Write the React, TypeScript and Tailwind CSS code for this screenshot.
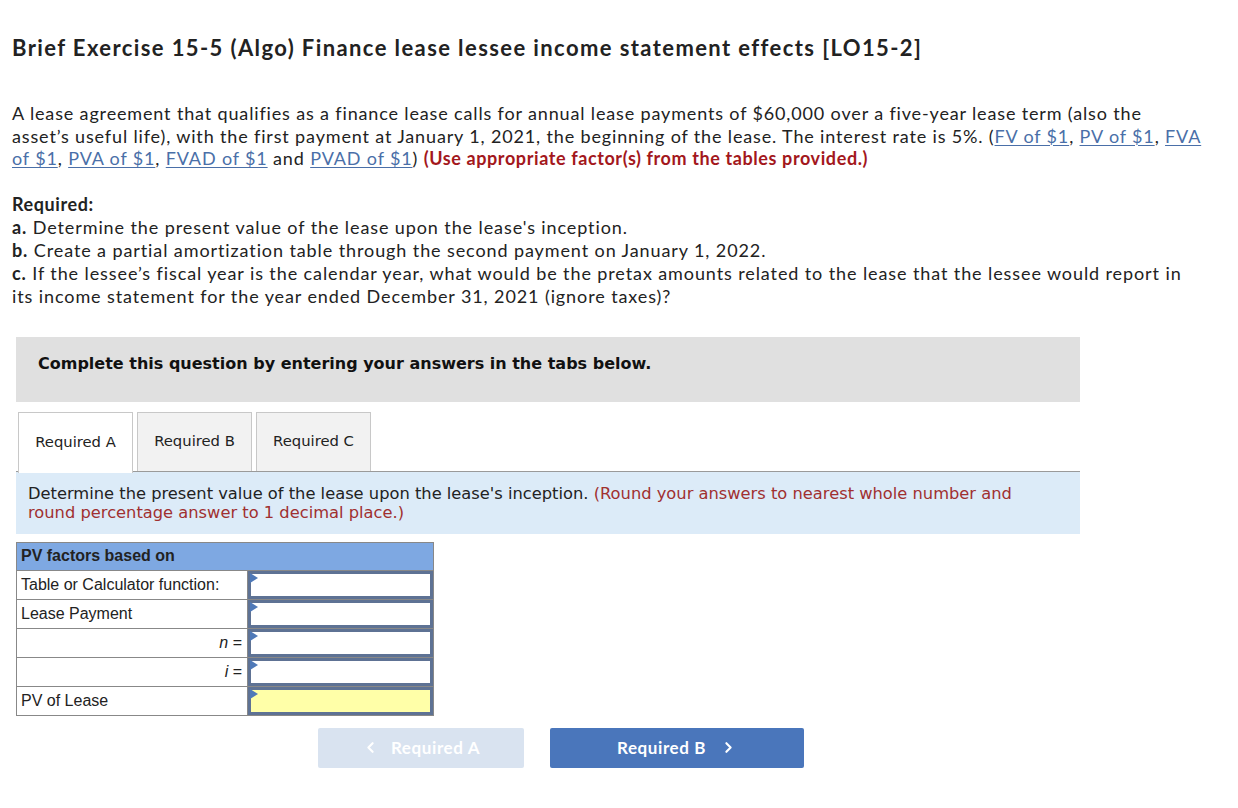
import { ChevronLeft, ChevronRight } from 'lucide-react';

const proxima = { fontFamily: 'Lato, "Open Sans", sans-serif' };

function Link({ children }: { children: React.ReactNode }) {
  return <span className="text-[#4a6fa8] underline decoration-1 underline-offset-2">{children}</span>;
}

function InputCell({ yellow }: { yellow?: boolean }) {
  return (
    <div className={`relative h-[28px] border-[3px] border-[#5e7294] ${yellow ? 'bg-[#ffffa8]' : 'bg-white'}`}>
      <span className="absolute -left-[1px] -top-[1px] w-0 h-0 border-t-[5px] border-b-[5px] border-l-[8px] border-t-transparent border-b-transparent border-l-[#4f79b8]" />
    </div>
  );
}

const rows = [
  { label: 'Table or Calculator function:', align: 'left' },
  { label: 'Lease Payment', align: 'left' },
  { label: 'n =', align: 'right', italic: true },
  { label: 'i =', align: 'right', italic: true },
  { label: 'PV of Lease', align: 'left', yellow: true },
];

export default function App() {
  return (
    <div className="bg-white w-[1238px] h-[808px] text-[#222] overflow-hidden">
      <h1 className="pt-[34px] pl-[12px] text-[22px] font-bold leading-[28px] tracking-[1.4px] whitespace-nowrap" style={proxima}>
        Brief Exercise 15-5 (Algo) Finance lease lessee income statement effects [LO15-2]
      </h1>

      <p className="mt-[40px] pl-[12px] text-[18px] leading-[22.5px] tracking-[0.85px] whitespace-nowrap" style={proxima}>
        A lease agreement that qualifies as a finance lease calls for annual lease payments of $60,000 over a five-year lease term (also the
        <br />
        asset’s useful life), with the first payment at January 1, 2021, the beginning of the lease. The interest rate is 5%. (<Link>FV of $1</Link>, <Link>PV of $1</Link>, <Link>FVA</Link>
        <br />
        <Link>of $1</Link>, <Link>PVA of $1</Link>, <Link>FVAD of $1</Link> and <Link>PVAD of $1</Link>){' '}
        <span className="font-bold text-[#a3171c] tracking-[0.6px]">(Use appropriate factor(s) from the tables provided.)</span>
      </p>

      <div className="mt-[23px] pl-[12px] text-[18px] leading-[23px] tracking-[0.9px] whitespace-nowrap" style={proxima}>
        <div className="font-bold tracking-[0.6px]">Required:</div>
        <div><b>a.</b> Determine the present value of the lease upon the lease's inception.</div>
        <div><b>b.</b> Create a partial amortization table through the second payment on January 1, 2022.</div>
        <div><b>c.</b> If the lessee’s fiscal year is the calendar year, what would be the pretax amounts related to the lease that the lessee would report in</div>
        <div>its income statement for the year ended December 31, 2021 (ignore taxes)?</div>
      </div>

      <div className="ml-[16px] w-[1064px] mt-[29px]" style={{ fontFamily: '"DejaVu Sans", Verdana, sans-serif' }}>
        <div className="h-[65px] bg-[#e0e0e0] pl-[22px] pt-[16px] text-[16px] font-bold leading-[22px] text-[#111]">
          Complete this question by entering your answers in the tabs below.
        </div>

        <div className="mt-[10px] flex gap-[4px] pl-[2px] h-[60px] border-b border-[#9a9a9a] text-[14.8px] text-[#222]">
          <div className="w-[115px] h-[61px] -mb-px bg-white border border-[#c8c8c8] border-b-0 flex items-center justify-center relative z-10">Required A</div>
          <div className="w-[115px] bg-[#f2f2f2] border border-[#c8c8c8] border-b-0 flex items-center justify-center">Required B</div>
          <div className="w-[115px] bg-[#f2f2f2] border border-[#c8c8c8] border-b-0 flex items-center justify-center">Required C</div>
        </div>

        <div className="h-[62px] bg-[#dcebf8] pl-[12px] pt-[12px] text-[16.3px] leading-[19.5px] text-[#222]">
          Determine the present value of the lease upon the lease's inception.{' '}
          <span className="text-[#a03030]">(Round your answers to nearest whole number and<br />round percentage answer to 1 decimal place.)</span>
        </div>
      </div>

      <table className="ml-[16px] mt-[8px] border-collapse border border-[#888] text-[16px] text-[#222]" style={{ fontFamily: '"Liberation Sans", Arial, sans-serif' }}>
        <tbody>
          <tr>
            <td colSpan={2} className="h-[28px] bg-[#7ea8e2] px-[4px] font-bold border-b border-[#888]">PV factors based on</td>
          </tr>
          {rows.map((r) => (
            <tr key={r.label} className="border-b border-[#888]">
              <td className={`w-[231px] h-[28px] px-[4px] border-r border-[#888] ${r.align === 'right' ? 'text-right pr-[5px]' : 'text-left'}`}>
                {r.italic ? (
                  <span><i>{r.label[0]}</i> =</span>
                ) : (
                  r.label
                )}
              </td>
              <td className="w-[186px] p-0">
                <InputCell yellow={r.yellow} />
              </td>
            </tr>
          ))}
        </tbody>
      </table>

      <div className="mt-[12px] ml-[318px] flex gap-[26px] text-[17px] font-bold tracking-[0.6px] text-white" style={proxima}>
        <div className="w-[206px] h-[40px] rounded-[2px] bg-[#d9e3f0] flex items-center justify-center gap-[12px]">
          <ChevronLeft size={17} strokeWidth={3} />
          <span>Required A</span>
        </div>
        <div className="w-[254px] h-[40px] rounded-[2px] bg-[#4a76bb] flex items-center justify-center gap-[14px]">
          <span>Required B</span>
          <ChevronRight size={17} strokeWidth={3} />
        </div>
      </div>
    </div>
  );
}
